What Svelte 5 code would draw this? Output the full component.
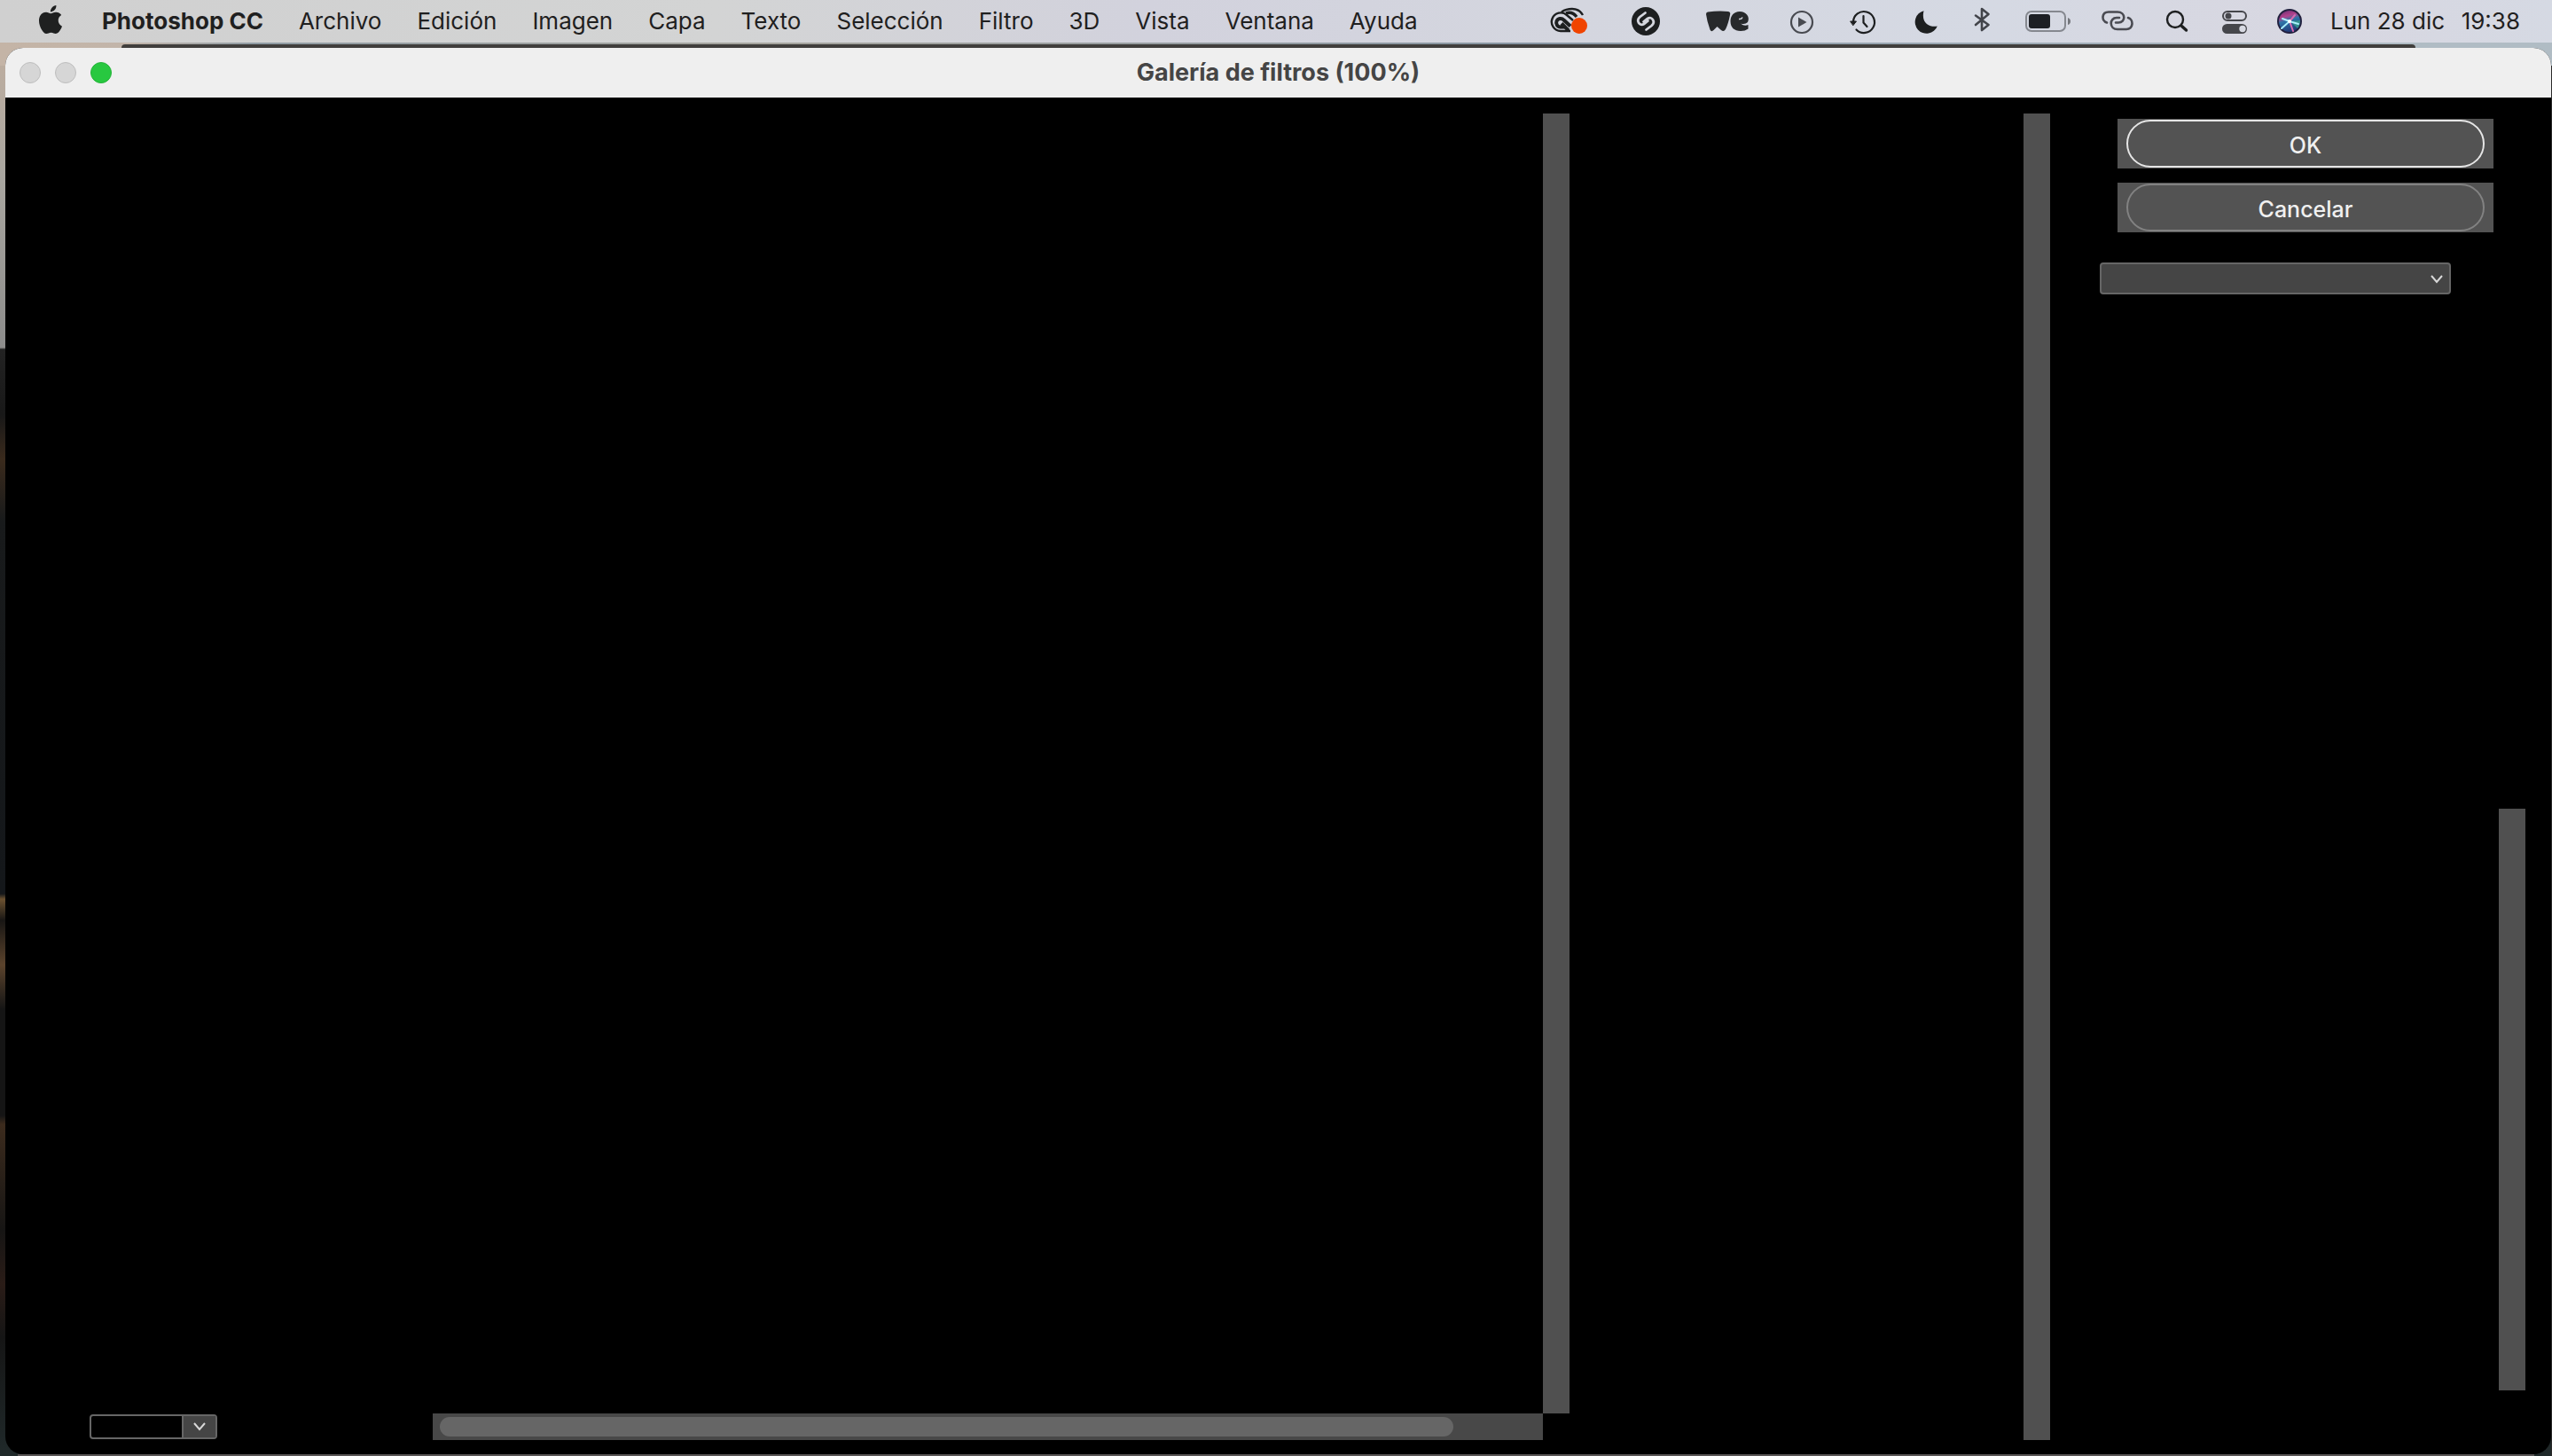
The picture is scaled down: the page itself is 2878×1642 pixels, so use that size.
<script>
	const menus = ['Archivo', 'Edición', 'Imagen', 'Capa', 'Texto', 'Selección', 'Filtro', '3D', 'Vista', 'Ventana', 'Ayuda'];

	let zoom = $state('');
	let effect = $state('');
</script>

<div class="screen">
	<header class="menubar">
		<nav>
			<a class="apple" href="#apple" aria-label="Apple">
				<svg width="32" height="32" viewBox="0 0 24 24"><path fill="#1f2020" d="M12.152 6.896c-.948 0-2.415-1.078-3.96-1.04-2.04.027-3.91 1.183-4.961 3.014-2.117 3.675-.546 9.103 1.519 12.09 1.013 1.454 2.208 3.09 3.792 3.039 1.52-.065 2.09-.987 3.935-.987 1.831 0 2.35.987 3.96.948 1.637-.026 2.676-1.48 3.676-2.948 1.156-1.688 1.636-3.325 1.662-3.415-.039-.013-3.182-1.221-3.22-4.857-.026-3.04 2.48-4.494 2.597-4.559-1.429-2.09-3.623-2.324-4.39-2.376-2-.156-3.675 1.09-4.61 1.09zM15.53 3.83c.843-1.012 1.4-2.427 1.245-3.83-1.207.052-2.662.805-3.532 1.818-.78.896-1.454 2.338-1.273 3.714 1.338.104 2.715-.688 3.559-1.701" /></svg>
			</a>
			<a class="app" href="#app">Photoshop CC</a>
			{#each menus as menu}
				<a href="#{menu}">{menu}</a>
			{/each}
		</nav>

		<div class="status">
			<!-- creative cloud -->
			<svg width="62" height="48" viewBox="-31 -24 62 48" fill="none" stroke="#1d1f20">
				<path stroke-width="2.4" d="M2 11H-9A10.300 10.300 0 1 1-2-7L5-1M-8-10.500Q-3-14 4-14Q12-14 16-7" />
				<path stroke-width="4" d="M0 10.500L-8 2.500M-4 6.500H-9A4.800 4.800 0 1 1-5.500-1.500L2 5.500" />
				<path stroke-width="3.500" d="M-3-9Q4-11.500 9-5" />
				<circle cx="12" cy="5" r="9" fill="#f04400" stroke="none" />
			</svg>
			<!-- shazam -->
			<svg width="48" height="48" viewBox="-24 -24 48 48" fill="none">
				<circle r="16" fill="#1d1f20" />
				<path stroke="#d4d6de" stroke-width="2.8" stroke-linecap="round" d="M-.5-9.500L-6.500-5C-11.500-.5-7 6-2 3L2.500-.5M.5 9.500L6.500 5C11.500 .5 7-6 2-3L-2.500 .5" />
			</svg>
			<!-- wetransfer -->
			<svg width="72" height="48" viewBox="-36 -24 72 48">
				<path fill="#27292b" d="M-22-10.500Q-10-12 1-11Q4-10.500 3-7Q1 3-2 9Q-4 12.500-7 10L-11.500 6L-15.500 10Q-18 12.500-19.500 9.500Q-23 0-24-8Q-24-10.500-22-10.500Z" />
				<path fill="#27292b" d="M14-11C7-11 3.500-6 3.500 0C3.500 7 8 11 15 11Q20 11 23.500 8.500V4Q19 6 15 2.500Q20 4 23 1C26-5 21-11 14-11Z" />
				<path fill="none" stroke="#d4d6de" stroke-width="1.500" d="M13-2.500Q16-2 17-4.500" />
			</svg>
			<!-- play -->
			<svg width="32" height="48" viewBox="-16 -24 32 48">
				<circle cy="1" r="12" fill="none" stroke="#484a50" stroke-width="2.2" />
				<path fill="#484a50" d="M-4-4.500L5.500 1L-4 6.500Z" />
			</svg>
			<!-- time machine -->
			<svg width="42" height="48" viewBox="-21 -24 42 48" fill="none" stroke="#1d1f20" stroke-width="2.2" stroke-linecap="round" stroke-linejoin="round">
				<path d="M-11 1A12 12 0 1 1-7.500 9.500M.5-6V1.500L4.500 6" />
				<path fill="#1d1f20" stroke-width="1" d="M-14 0H-7.500L-11 4.500Z" />
			</svg>
			<!-- do not disturb -->
			<svg width="36" height="48" viewBox="-18 -24 36 48">
				<path fill="#1d1f20" d="M-2.500-11.800A13 13 0 1 0 12.800 5.500C5 7-6 3-2.500-11.800Z" />
			</svg>
			<!-- bluetooth -->
			<svg width="26" height="48" viewBox="-13 -24 26 48" fill="none" stroke="#42444a" stroke-width="2.6" stroke-linecap="round" stroke-linejoin="round">
				<path d="M-7-6.500L7.500 4L0 10V-14L7.500-8L-7 4" />
			</svg>
			<!-- battery -->
			<svg width="58" height="48" viewBox="-29 -24 58 48">
				<rect x="-24" y="-11" width="44" height="22" rx="6" fill="none" stroke="#85888f" stroke-width="2" />
				<rect x="-21" y="-8" width="24" height="16" rx="3" fill="#1d1f24" />
				<path fill="#73767c" d="M23-4Q26-3 26 0T23 4Z" />
			</svg>
			<!-- hotspot -->
			<svg width="36" height="48" viewBox="-18 -24 36 48" fill="none" stroke="#4a4b52" stroke-width="2.6" stroke-linecap="round">
				<path d="M-12 1.500C-18.500-.5-18-10.500-10-10.500H0C9.500-10.500 9.500 1.500 1 1.500H-2M12-4C18.500-2 18 9 10 9H0C-9.500 9-9.500-4-1-4H2" />
			</svg>
			<!-- spotlight -->
			<svg width="34" height="48" viewBox="-17 -24 34 48" fill="none" stroke="#1d1f20" stroke-linecap="round">
				<circle cx="-2" cy="-2" r="9" stroke-width="2.4" />
				<path stroke-width="3.4" d="M5.500 5.500L10.500 10" />
			</svg>
			<!-- control center -->
			<svg width="32" height="48" viewBox="-16 -24 32 48">
				<rect x="-13" y="-11" width="26" height="10" rx="5" fill="none" stroke="#45464b" stroke-width="2" />
				<circle cx="-7" cy="-6" r="3.500" fill="#45464b" />
				<rect x="-14" y="3" width="28" height="11" rx="5.500" fill="#45464b" />
				<circle cx="9" cy="8.500" r="3.700" fill="#d7d9e2" />
			</svg>
			<!-- siri -->
			<svg width="28" height="48" viewBox="-14 -24 28 48">
				<defs>
					<linearGradient id="siri" x1="0" y1="0" x2=".3" y2="1">
						<stop offset="0" stop-color="#5a2a6e" />
						<stop offset=".35" stop-color="#b0418b" />
						<stop offset=".55" stop-color="#2d74a8" />
						<stop offset="1" stop-color="#233a78" />
					</linearGradient>
				</defs>
				<circle r="13" fill="url(#siri)" stroke="#22203f" stroke-width="2" />
				<path fill="#37a08d" opacity=".8" d="M1 0L12-1Q12 5 9 8Z" />
				<path fill="none" stroke="#d86ab0" stroke-width="2" stroke-linecap="round" d="M0 0L4 11M1-1L6-7" />
				<path fill="none" stroke="#a9eefb" stroke-width="2" stroke-linecap="round" d="M-9 8L0 0L10 3M-8-3L0 0" />
				<circle r="2" fill="#fff" />
			</svg>
			<time><span>Lun 28 dic</span><span>19:38</span></time>
		</div>
	</header>

	<main class="desktop">
		<div class="back-window"></div>
		<section class="window">
			<div class="titlebar">
				<div class="lights">
					<button aria-label="Cerrar"></button>
					<button aria-label="Minimizar"></button>
					<button class="on" aria-label="Zoom"></button>
				</div>
				<h1>Galería de filtros (100%)</h1>
			</div>

			<div class="gallery">
				<div class="preview">
					<div class="canvas-row">
						<div class="canvas"></div>
						<div class="track"></div>
					</div>
					<div class="canvas-footer">
						<div class="combo">
							<input type="text" aria-label="Nivel de zoom" bind:value={zoom} />
							<button aria-label="Elegir zoom">
								<svg width="14" height="10" viewBox="0 0 14 10"><path d="M1 1L7 8L13 1" /></svg>
							</button>
						</div>
						<div class="h-track"><div class="thumb"></div></div>
					</div>
				</div>

				<div class="filters">
					<div class="track"></div>
				</div>

				<div class="options">
					<div class="actions">
						<div class="plate"><button class="primary">OK</button></div>
						<div class="plate"><button>Cancelar</button></div>
					</div>
					<div class="effect">
						<select aria-label="Filtro" bind:value={effect}>
							<option value=""></option>
						</select>
						<svg width="14" height="10" viewBox="0 0 14 10"><path d="M1 1L7 8L13 1" /></svg>
					</div>
					<div class="layers">
						<div class="track"></div>
					</div>
				</div>
			</div>
		</section>
	</main>
</div>

<style>
	:global(body) {
		margin: 0;
		background: #151515;
	}

	.screen {
		display: flex;
		flex-direction: column;
		min-height: 100vh;
		font-family: Inter, 'Liberation Sans', sans-serif;
		font-size: 26px;
	}

	.menubar {
		display: flex;
		justify-content: space-between;
		height: 48px;
		line-height: 48px;
		background: linear-gradient(90deg, #d0d0d0, #d3d4d4 28%, #d2d2dd 45%, #d4d6df 62%, #d5d9e3 78%, #d8d7e1 91%, #d5d9e3);
		color: #1f2020;
		white-space: nowrap;
	}

	nav {
		display: flex;
		gap: 40px;
		padding-left: 41px;
	}

	nav a {
		color: inherit;
		text-decoration: none;
	}

	.apple {
		display: flex;
		align-items: center;
		width: 34px;
		height: 44px;
	}

	.app {
		font-weight: 700;
	}

	.status {
		display: flex;
		gap: 32px;
		padding-right: 36px;
	}

	.status svg {
		flex: none;
	}

	time {
		display: flex;
		justify-content: space-between;
		width: 214px;
	}

	.desktop {
		flex: 1;
		display: flex;
		flex-direction: column;
		padding: 2px 1px 2px 6px;
		background:
			linear-gradient(#5a5656, #5a5656) 50% 100% / calc(100% - 40px) 2px no-repeat,
			linear-gradient(90deg, #c4b4a6, #c2b5aa 5%, #8f9ba3 10%, #a5a49d 30%, #8795a2 60%, #b0bcc4 95%) 0 0 / 100% 26px no-repeat,
			linear-gradient(#2a2a2a, #2a2a2a) 100% 0 / 1px 100% no-repeat,
			linear-gradient(#bfae9f, #a9a6a0 150px, #8c8c8b 344px, #222 346px, #181818 420px, #3a2a1c 470px, #181a1b 540px, #14171a 960px, #6b5130 966px, #181614 990px, #5b432c 1040px, #151515 1090px, #151515 1210px, #3c2b1d 1220px, #161514 1340px, #2a1c17 1400px, #151515 1460px, #20292a 100%);
	}

	.back-window {
		height: 4px;
		margin: 0 153px 0 131px;
		border-radius: 6px 6px 0 0;
		background: #403e3c;
	}

	.window {
		flex: 1;
		display: flex;
		flex-direction: column;
		border-radius: 20px;
		overflow: hidden;
		background: #000;
	}

	.titlebar {
		display: grid;
		grid-template-columns: 1fr auto 1fr;
		align-items: center;
		height: 56px;
		background: #efefef;
	}

	.lights {
		display: flex;
		gap: 16px;
		padding-left: 16px;
	}

	.lights button {
		width: 24px;
		height: 24px;
		padding: 0;
		border: 1px solid #bdbdbd;
		border-radius: 50%;
		background: #d6d6d6;
	}

	.lights .on {
		border-color: #24b339;
		background: #28c840;
	}

	h1 {
		margin: 0;
		font-size: 27px;
		font-weight: 700;
		line-height: 32px;
		color: #454545;
	}

	.gallery {
		flex: 1;
		display: flex;
	}

	.preview {
		flex: 1;
		display: flex;
		flex-direction: column;
		padding: 18px 0 16px;
	}

	.canvas-row {
		flex: 1;
		display: flex;
	}

	.canvas {
		flex: 1;
	}

	.track {
		width: 30px;
		background: #505050;
	}

	.canvas-footer {
		display: flex;
		align-items: center;
		padding: 0 30px 0 95px;
	}

	.combo {
		display: flex;
		box-sizing: border-box;
		width: 144px;
		height: 28px;
		margin-right: 243px;
		border: 2px solid #666;
		border-radius: 4px;
		background: #000;
	}

	.combo input {
		flex: 1;
		min-width: 0;
		padding: 0 8px;
		border: none;
		background: none;
		color: #eee;
		font: inherit;
		font-size: 18px;
	}

	.combo button {
		display: flex;
		align-items: center;
		justify-content: center;
		width: 38px;
		padding: 0;
		border: none;
		border-left: 2px solid #666;
		background: #454545;
	}

	.combo path,
	.effect path {
		fill: none;
		stroke: #d8d8d8;
		stroke-width: 2;
	}

	.h-track {
		flex: 1;
		height: 30px;
		box-sizing: border-box;
		padding: 4px 8px;
		background: #484848;
	}

	.thumb {
		width: 92.5%;
		height: 22px;
		border-radius: 11px;
		background: #666;
	}

	.filters {
		display: flex;
		justify-content: flex-end;
		width: 542px;
		padding: 18px 0 16px;
	}

	.options {
		display: flex;
		flex-direction: column;
		width: 565px;
	}

	.actions {
		display: flex;
		flex-direction: column;
		gap: 16px;
		padding: 24px 65px 34px 76px;
	}

	.plate {
		padding: 1px 10px;
		background: #535353;
	}

	.plate button {
		display: block;
		width: 100%;
		height: 54px;
		padding: 4px 0 0;
		border: 2px solid #828282;
		border-radius: 27px;
		background: none;
		color: #f0f0f0;
		font: inherit;
		font-size: 25px;
		font-weight: 500;
	}

	.plate .primary {
		border-color: #e6e6e6;
	}

	.effect {
		position: relative;
		width: 396px;
		margin-left: 56px;
	}

	.effect select {
		display: block;
		appearance: none;
		width: 100%;
		height: 36px;
		padding: 0 32px 0 10px;
		border: 2px solid #666;
		border-radius: 4px;
		background: #454545;
		color: #eee;
		font: inherit;
		font-size: 20px;
	}

	.effect svg {
		position: absolute;
		top: 14px;
		right: 9px;
		pointer-events: none;
	}

	.layers {
		flex: 1;
		display: flex;
		justify-content: flex-end;
		padding: 580px 29px 72px 0;
	}
</style>
